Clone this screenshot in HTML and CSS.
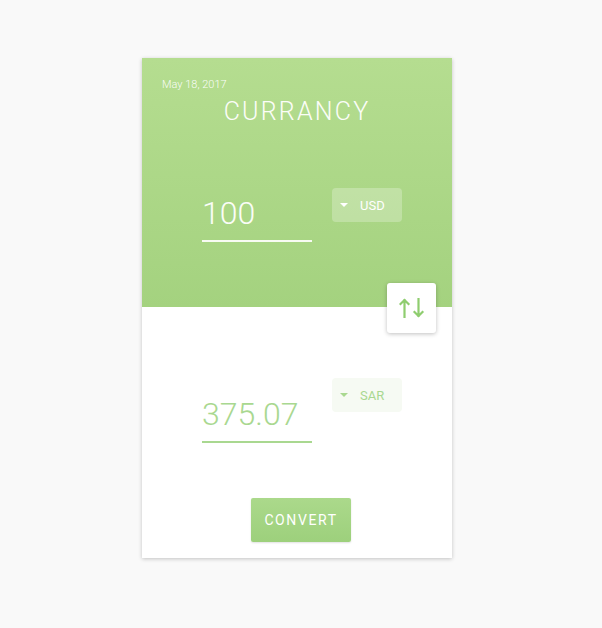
FILE: index.html
```html
<!DOCTYPE html>
<html>
<head>
<meta charset="utf-8">
<link rel="stylesheet" href="styles.css">
</head>
<body>
<div class="card">
  <div class="top">
    <div class="date">May 18, 2017</div>
    <div class="title">CURRANCY</div>
    <div class="row row-top">
      <div class="field field-top">100</div>
      <div class="select select-top"><span class="caret"></span>USD</div>
    </div>
  </div>
  <button class="swap" type="button">
    <svg width="26" height="24" viewBox="0 0 26 24">
      <path d="M5.5 21V4M1.5 8L5.5 4L9.5 8" fill="none" stroke="#8fcd6f" stroke-width="2.2" stroke-linecap="square"/>
      <path d="M19.5 3V20M15.5 16L19.5 20L23.5 16" fill="none" stroke="#8fcd6f" stroke-width="2.2" stroke-linecap="square"/>
    </svg>
  </button>
  <div class="bottom">
    <div class="row row-bottom">
      <div class="field field-bottom">375.07</div>
      <div class="select select-bottom"><span class="caret"></span>SAR</div>
    </div>
    <div class="actions">
      <button class="convert" type="button">CONVERT</button>
    </div>
  </div>
</div>
</body>
</html>
```

FILE: styles.css
```css
html, body {
  margin: 0;
  padding: 0;
  background: #f9f9f9;
  font-family: Roboto, "Liberation Sans", sans-serif;
}
body {
  padding: 58px 0 0 142px;
  height: 628px;
  box-sizing: border-box;
}
.card {
  position: relative;
  width: 310px;
  height: 500px;
  background: #fff;
  box-shadow: 0 1px 4px rgba(0, 0, 0, 0.22);
  display: flex;
  flex-direction: column;
}
.top {
  height: 249px;
  background: linear-gradient(180deg, #b5dd90 0%, #a4d27f 100%);
  padding: 20px 20px 0 20px;
  box-sizing: border-box;
  color: #fff;
}
.date {
  font-size: 11px;
  font-weight: 300;
  line-height: 13px;
  color: rgba(255, 255, 255, 0.95);
}
.title {
  margin-top: 6px;
  text-align: center;
  font-size: 25px;
  font-weight: 300;
  letter-spacing: 2.2px;
  line-height: 30px;
  color: #fbfdf8;
}
.row {
  display: flex;
  align-items: flex-start;
  padding-left: 40px;
}
.row-top {
  margin-top: 61px;
}
.field {
  width: 110px;
  font-size: 32px;
  font-weight: 300;
  line-height: 40px;
  padding-bottom: 6px;
  border-bottom: 2px solid;
}
.field-top {
  margin-top: 5px;
  padding-bottom: 7px;
  color: #fafdf7;
  border-color: #f7fbf3;
}
.select {
  margin-left: 20px;
  width: 70px;
  height: 34px;
  border-radius: 4px;
  display: flex;
  align-items: center;
  box-sizing: border-box;
  padding-left: 8px;
  font-size: 13px;
  font-weight: 400;
}
.select-top {
  background: rgba(255, 255, 255, 0.25);
  color: #fff;
}
.caret {
  width: 0;
  height: 0;
  border-left: 4px solid transparent;
  border-right: 4px solid transparent;
  border-top: 4px solid currentColor;
  margin-right: 12px;
}
.swap {
  position: absolute;
  left: 245px;
  top: 225px;
  width: 49px;
  height: 50px;
  border: none;
  border-radius: 3px;
  background: #fff;
  box-shadow: 0 1px 4px rgba(0, 0, 0, 0.25);
  display: flex;
  align-items: center;
  justify-content: center;
  padding: 0;
}
.bottom {
  flex: 1;
  padding: 0 20px;
  display: flex;
  flex-direction: column;
}
.row-bottom {
  margin-top: 71px;
}
.field-bottom {
  margin-top: 16px;
  padding-bottom: 7px;
  color: #a9d890;
  border-color: #a9d890;
}
.select-bottom {
  background: #f6faf3;
  color: #a9d890;
}
.actions {
  margin-top: 55px;
  padding-left: 8px;
  display: flex;
  justify-content: center;
}
.convert {
  width: 100px;
  height: 44px;
  border: none;
  border-radius: 2px;
  background: linear-gradient(180deg, #abd98b 0%, #9dd07c 100%);
  color: #fff;
  font-family: Roboto, "Liberation Sans", sans-serif;
  font-size: 14px;
  letter-spacing: 1.6px;
  padding: 0;
  box-shadow: 0 1px 2px rgba(0, 0, 0, 0.12);
}
```
